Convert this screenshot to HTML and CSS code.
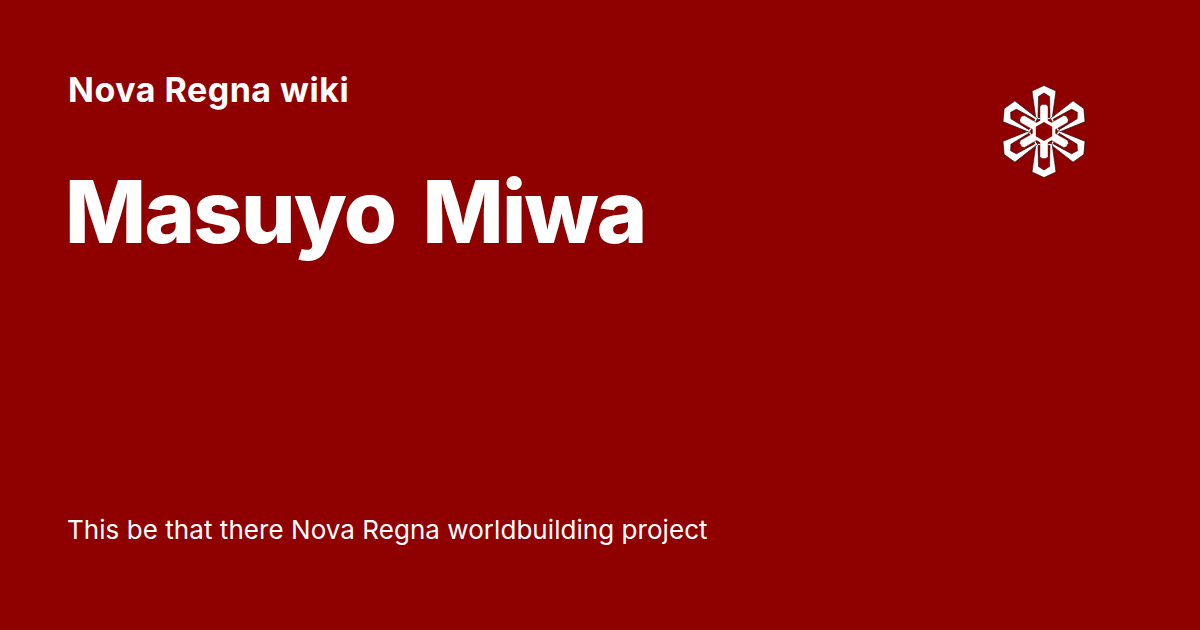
FILE: index.html
```html
<!DOCTYPE html>
<html lang="en">
<head>
<meta charset="utf-8">
<title>Masuyo Miwa</title>
<link rel="stylesheet" href="styles.css">
</head>
<body>
<main class="card">
  <header class="top">
    <div class="heading">
      <div class="site">Nova Regna wiki</div>
      <h1 class="title">Masuyo Miwa</h1>
    </div>
    <svg class="logo" viewBox="-44 -50.5 88 100" width="88" height="100" aria-hidden="true">
      <defs>
        <g id="arm">
          <path class="arm" fill-rule="evenodd" d="M0 -46L12 -40.500L8 -12L-8 -12L-12 -40.500ZM0 -38.500L-5.500 -35L-6 -14L6 -14L5.500 -35Z"/>
          <path class="bar" d="M-4 -7L-4 -25L-2 -27L2 -27L4 -25L4 -7Z"/>
        </g>
      </defs>
      <use href="#arm"/>
      <use href="#arm" transform="rotate(60)"/>
      <use href="#arm" transform="rotate(120)"/>
      <use href="#arm" transform="rotate(180)"/>
      <use href="#arm" transform="rotate(240)"/>
      <use href="#arm" transform="rotate(300)"/>
      <path class="joint" d="M0 -13L11.300 -6.500L11.300 6.500L0 13L-11.300 6.500L-11.300 -6.500Z"/>
      <path class="hub" d="M0 -9.500L8.200 -4.750L8.200 4.750L0 9.500L-8.200 4.750L-8.200 -4.750Z"/>
    </svg>
  </header>
  <p class="desc">This be that there Nova Regna worldbuilding project</p>
</main>
</body>
</html>
```
FILE: styles.css
```css
html, body {
  margin: 0;
  padding: 0;
  width: 1200px;
  height: 630px;
  overflow: hidden;
}
.card {
  box-sizing: border-box;
  width: 1200px;
  height: 630px;
  padding: 70px 112px 84px 68px;
  background: #8f0000;
  color: #fff;
  font-family: Inter, "Liberation Sans", sans-serif;
  display: flex;
  flex-direction: column;
  justify-content: space-between;
}
.top {
  display: flex;
  justify-content: space-between;
  align-items: flex-start;
}
.site {
  font-size: 34px;
  font-weight: 700;
  line-height: 40px;
  letter-spacing: 0.5px;
}
.title {
  margin: 50px 0 0 -3px;
  font-size: 86px;
  font-weight: 800;
  line-height: 104px;
  letter-spacing: -1.700px;
  word-spacing: 10px;
}
.logo {
  display: block;
  margin-top: 11px;
}
.arm {
  fill: #fff;
  stroke: #1a0000;
  stroke-width: 0.6;
}
.bar {
  fill: #fff;
  stroke: #5a0000;
  stroke-width: 0.4;
}
.joint {
  fill: #fff;
}
.hub {
  fill: #8f0000;
}
.desc {
  margin: 0 0 0 -1px;
  font-size: 26px;
  line-height: 32px;
  font-weight: 400;
  letter-spacing: 0.050px;
}
```
